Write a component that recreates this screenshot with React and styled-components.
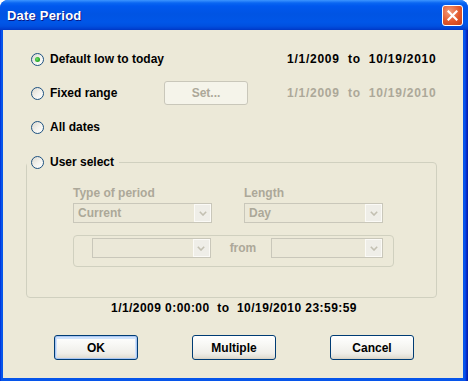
import styled, { createGlobalStyle } from "styled-components";

const GlobalStyle = createGlobalStyle`
  html, body {
    margin: 0;
    padding: 0;
    background: #fff;
  }
  body {
    font-family: "Liberation Sans", Arial, sans-serif;
  }
  * {
    box-sizing: border-box;
  }
`;

const Window = styled.div`
  width: 468px;
  height: 381px;
  display: flex;
  flex-direction: column;
  border-radius: 8px 8px 0 0;
  overflow: hidden;
  background: #0555e8;
`;

const TitleBar = styled.div`
  height: 30px;
  flex: none;
  display: flex;
  align-items: center;
  justify-content: space-between;
  padding: 1px 5px 0 7px;
  background: linear-gradient(
    to bottom,
    #3d95ff 0px,
    #0a66f2 3px,
    #0058ee 6px,
    #0054e3 14px,
    #0056e8 22px,
    #0050e0 26px,
    #003fd0 29px,
    #0036c0 30px
  );
`;

const Title = styled.span`
  color: #fff;
  font-weight: bold;
  font-size: 13px;
  letter-spacing: 0.2px;
  text-shadow: 1px 1px 0 #0a1883;
`;

const CloseButton = styled.button`
  width: 21px;
  height: 21px;
  padding: 0;
  border: 1px solid #fff;
  border-radius: 3px;
  background: radial-gradient(circle at 35% 30%, #f19c7c 0%, #e2582c 55%, #c43f18 100%);
  display: flex;
  align-items: center;
  justify-content: center;
`;

const Frame = styled.div`
  flex: 1;
  display: flex;
  padding: 0 5px 3px 3px;
  background: linear-gradient(to right, #0019cf 0, #0655ea 1px, #0655ea 465px, #0831d9 466px, #001ea0 468px);
`;

const Body = styled.div`
  flex: 1;
  display: flex;
  flex-direction: column;
  background: #ece9d8;
  padding: 12px 26px 0 23px;
  font-size: 12px;
  font-weight: bold;
  color: #000;
`;

const OptionRow = styled.div`
  height: 34px;
  display: grid;
  grid-template-columns: 133px 84px 1fr;
  align-items: center;
  padding-left: 5px;
`;

const RadioLabel = styled.label`
  display: flex;
  align-items: center;
  gap: 6px;
  line-height: 14px;
  white-space: nowrap;
`;

const Radio = styled.span`
  position: relative;
  width: 13px;
  height: 13px;
  flex: none;
  border-radius: 50%;
  border: 1px solid #1c5180;
  background: linear-gradient(135deg, #dcd9cf 0%, #f4f3ee 55%, #ffffff 100%);

  &::after {
    content: "";
    display: ${(p) => (p.$checked ? "block" : "none")};
    position: absolute;
    left: 3px;
    top: 3px;
    width: 5px;
    height: 5px;
    border-radius: 50%;
    background: radial-gradient(circle at 40% 40%, #6ee16a 0%, #29a829 60%, #1c8a1c 100%);
  }
`;

const DateText = styled.span`
  padding-left: 39px;
  white-space: pre;
  letter-spacing: 0.75px;
  color: ${(p) => (p.$disabled ? "#aca899" : "#000")};
`;

const SetButton = styled.button`
  width: 84px;
  height: 24px;
  border: 1px solid #c9c7ba;
  border-radius: 3px;
  background: #f5f4ea;
  color: #aca899;
  font: inherit;
  padding: 0;
`;

const GroupBox = styled.fieldset`
  margin: 11px 0 0;
  padding: 0 0 30px 0;
  border: 1px solid #d0d0bf;
  border-radius: 4px;
  min-width: 0;
`;

const Legend = styled.legend`
  padding: 0 5px 0 4px;
  margin: 0;
`;

const FieldGrid = styled.div`
  display: grid;
  grid-template-columns: 139px 139px;
  column-gap: 32px;
  row-gap: 3px;
  margin: 17px 0 0 46px;
  color: #aca899;
  line-height: 14px;
`;

const Combo = styled.div`
  width: ${(p) => p.$width}px;
  height: 20px;
  display: flex;
  border: 1px solid #c9c7ba;
  background: #ebe8d8;
  color: #aca899;
`;

const ComboText = styled.span`
  flex: 1;
  padding: 2px 0 0 4px;
  line-height: 14px;
`;

const ComboArrow = styled.span`
  width: 17px;
  flex: none;
  display: flex;
  align-items: center;
  justify-content: center;
  border: 1px solid #fbfaf6;
  background: #efeee8;
`;

const SubGroup = styled.div`
  margin: 12px 0 0 46px;
  width: 321px;
  height: 32px;
  display: flex;
  align-items: flex-start;
  padding: 2px 10px 0 18px;
  border: 1px solid #d0d0bf;
  border-radius: 4px;
  color: #aca899;
`;

const FromLabel = styled.span`
  line-height: 20px;
  margin: 0 15px 0 19px;
`;

const Summary = styled.div`
  margin-top: 3px;
  padding-left: 5px;
  text-align: center;
  line-height: 14px;
  white-space: pre;
  letter-spacing: 0.45px;
`;

const ButtonRow = styled.div`
  margin-top: 20px;
  padding-left: 5px;
  display: flex;
  justify-content: center;
  gap: 54px;
`;

const Button = styled.button`
  width: 84px;
  height: 25px;
  padding: 0;
  border: 1px solid #003c74;
  border-radius: 3px;
  font: inherit;
  color: #000;
  background: linear-gradient(to bottom, #ffffff 0%, #f8f8f5 35%, #efeee9 75%, #e3e0d6 92%, #d6d0c5 100%);
  box-shadow: ${(p) =>
    p.$default
      ? "inset 0 0 0 1px #a9c6f3, inset 0 1px 0 2px #cfe2fb"
      : "none"};
`;

const Chevron = () => (
  <svg width="8" height="5" viewBox="0 0 8 5">
    <path d="M0.8 0.8 L4 4 L7.2 0.8" fill="none" stroke="#c3c0b2" strokeWidth="1.6" />
  </svg>
);

const ComboBox = ({ width, value }) => (
  <Combo $width={width}>
    <ComboText>{value}</ComboText>
    <ComboArrow>
      <Chevron />
    </ComboArrow>
  </Combo>
);

const App = () => {
  return (
    <>
      <GlobalStyle />
      <Window>
        <TitleBar>
          <Title>Date Period</Title>
          <CloseButton aria-label="Close">
            <svg width="11" height="11" viewBox="0 0 11 11">
              <path d="M1.5 1.5 L9.5 9.5 M9.5 1.5 L1.5 9.5" stroke="#fff" strokeWidth="2.2" strokeLinecap="square" />
            </svg>
          </CloseButton>
        </TitleBar>
        <Frame>
          <Body>
            <OptionRow>
              <RadioLabel>
                <Radio $checked />
                Default low to today
              </RadioLabel>
              <span />
              <DateText>{"1/1/2009  to  10/19/2010"}</DateText>
            </OptionRow>
            <OptionRow>
              <RadioLabel>
                <Radio />
                Fixed range
              </RadioLabel>
              <SetButton disabled>Set...</SetButton>
              <DateText $disabled>{"1/1/2009  to  10/19/2010"}</DateText>
            </OptionRow>
            <OptionRow>
              <RadioLabel>
                <Radio />
                All dates
              </RadioLabel>
            </OptionRow>

            <GroupBox>
              <Legend>
                <RadioLabel>
                  <Radio />
                  User select
                </RadioLabel>
              </Legend>
              <FieldGrid>
                <span>Type of period</span>
                <span>Length</span>
                <ComboBox width={139} value="Current" />
                <ComboBox width={139} value="Day" />
              </FieldGrid>
              <SubGroup>
                <ComboBox width={120} value="" />
                <FromLabel>from</FromLabel>
                <ComboBox width={113} value="" />
              </SubGroup>
            </GroupBox>

            <Summary>{"1/1/2009 0:00:00  to  10/19/2010 23:59:59"}</Summary>

            <ButtonRow>
              <Button $default>OK</Button>
              <Button>Multiple</Button>
              <Button>Cancel</Button>
            </ButtonRow>
          </Body>
        </Frame>
      </Window>
    </>
  );
};

export default App;
